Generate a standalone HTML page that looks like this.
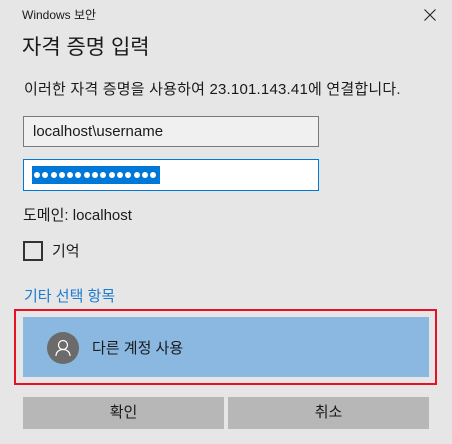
<!DOCTYPE html>
<html><head><meta charset="utf-8"><style>
*{margin:0;padding:0;box-sizing:border-box}
body{width:452px;height:444px;background:#e6e6e6;font-family:"Liberation Sans","Noto Sans CJK KR",sans-serif;color:#1a1a1a;position:relative;overflow:hidden}
.a{position:absolute;white-space:nowrap}
.d{display:inline-block;width:6px;height:6px;border-radius:50%;background:#fff;margin-right:2.3px}
</style></head><body>
<div class="a" style="left:22px;top:6px;font-size:12px">Windows 보안</div>
<svg class="a" style="left:424px;top:9px" width="12" height="12"><path d="M0.5 0.5L11.5 11.5M11.5 0.5L0.5 11.5" stroke="#222" stroke-width="1.1"/></svg>
<div class="a" style="left:22px;top:31px;font-size:21px">자격 증명 입력</div>
<div class="a" style="left:24px;top:78px;font-size:15px;letter-spacing:0.2px">이러한 자격 증명을 사용하여 23.101.143.41에 연결합니다.</div>
<div class="a" style="left:23px;top:116px;width:296px;height:31px;border:1px solid #7a7a7a;background:#f0f0f0;font-size:15px;padding:6px 0 0 9px;line-height:18px">localhost\username</div>
<div class="a" style="left:23px;top:159px;width:296px;height:32px;border:1px solid #0078d7;background:#fff"></div>
<div class="a" style="left:32px;top:166px;width:128px;height:18px;background:#0078d7;padding:6px 0 0 2px;line-height:6px;font-size:0"><span class="d"></span><span class="d"></span><span class="d"></span><span class="d"></span><span class="d"></span><span class="d"></span><span class="d"></span><span class="d"></span><span class="d"></span><span class="d"></span><span class="d"></span><span class="d"></span><span class="d"></span><span class="d"></span><span class="d"></span></div>
<div class="a" style="left:23px;top:204px;font-size:15px">도메인: localhost</div>
<div class="a" style="left:23px;top:241px;width:20px;height:20px;border:2px solid #333"></div>
<div class="a" style="left:52px;top:240px;font-size:15px">기억</div>
<div class="a" style="left:24px;top:285px;font-size:15px;color:#1a7bd0">기타 선택 항목</div>
<div class="a" style="left:14px;top:309px;width:423px;height:76px;border:2px solid #e81123"></div>
<div class="a" style="left:23px;top:317px;width:406px;height:60px;background:#8ab8e0"></div>
<div class="a" style="left:47px;top:332px;width:32px;height:32px;border-radius:50%;background:#6b6b6b"></div>
<svg class="a" style="left:47px;top:332px" width="32" height="32"><circle cx="16" cy="13" r="4.5" fill="none" stroke="#fff" stroke-width="1.2"/><path d="M9 24c0-4 3-6.5 7-6.5s7 2.5 7 6.5" fill="none" stroke="#fff" stroke-width="1.2"/></svg>
<div class="a" style="left:92px;top:337px;font-size:15px">다른 계정 사용</div>
<div class="a" style="left:23px;top:397px;width:201px;height:32px;background:#b7b7b7;font-size:15px;text-align:center;line-height:32px">확인</div>
<div class="a" style="left:228px;top:397px;width:201px;height:32px;background:#b7b7b7;font-size:15px;text-align:center;line-height:32px">취소</div>
</body></html>
